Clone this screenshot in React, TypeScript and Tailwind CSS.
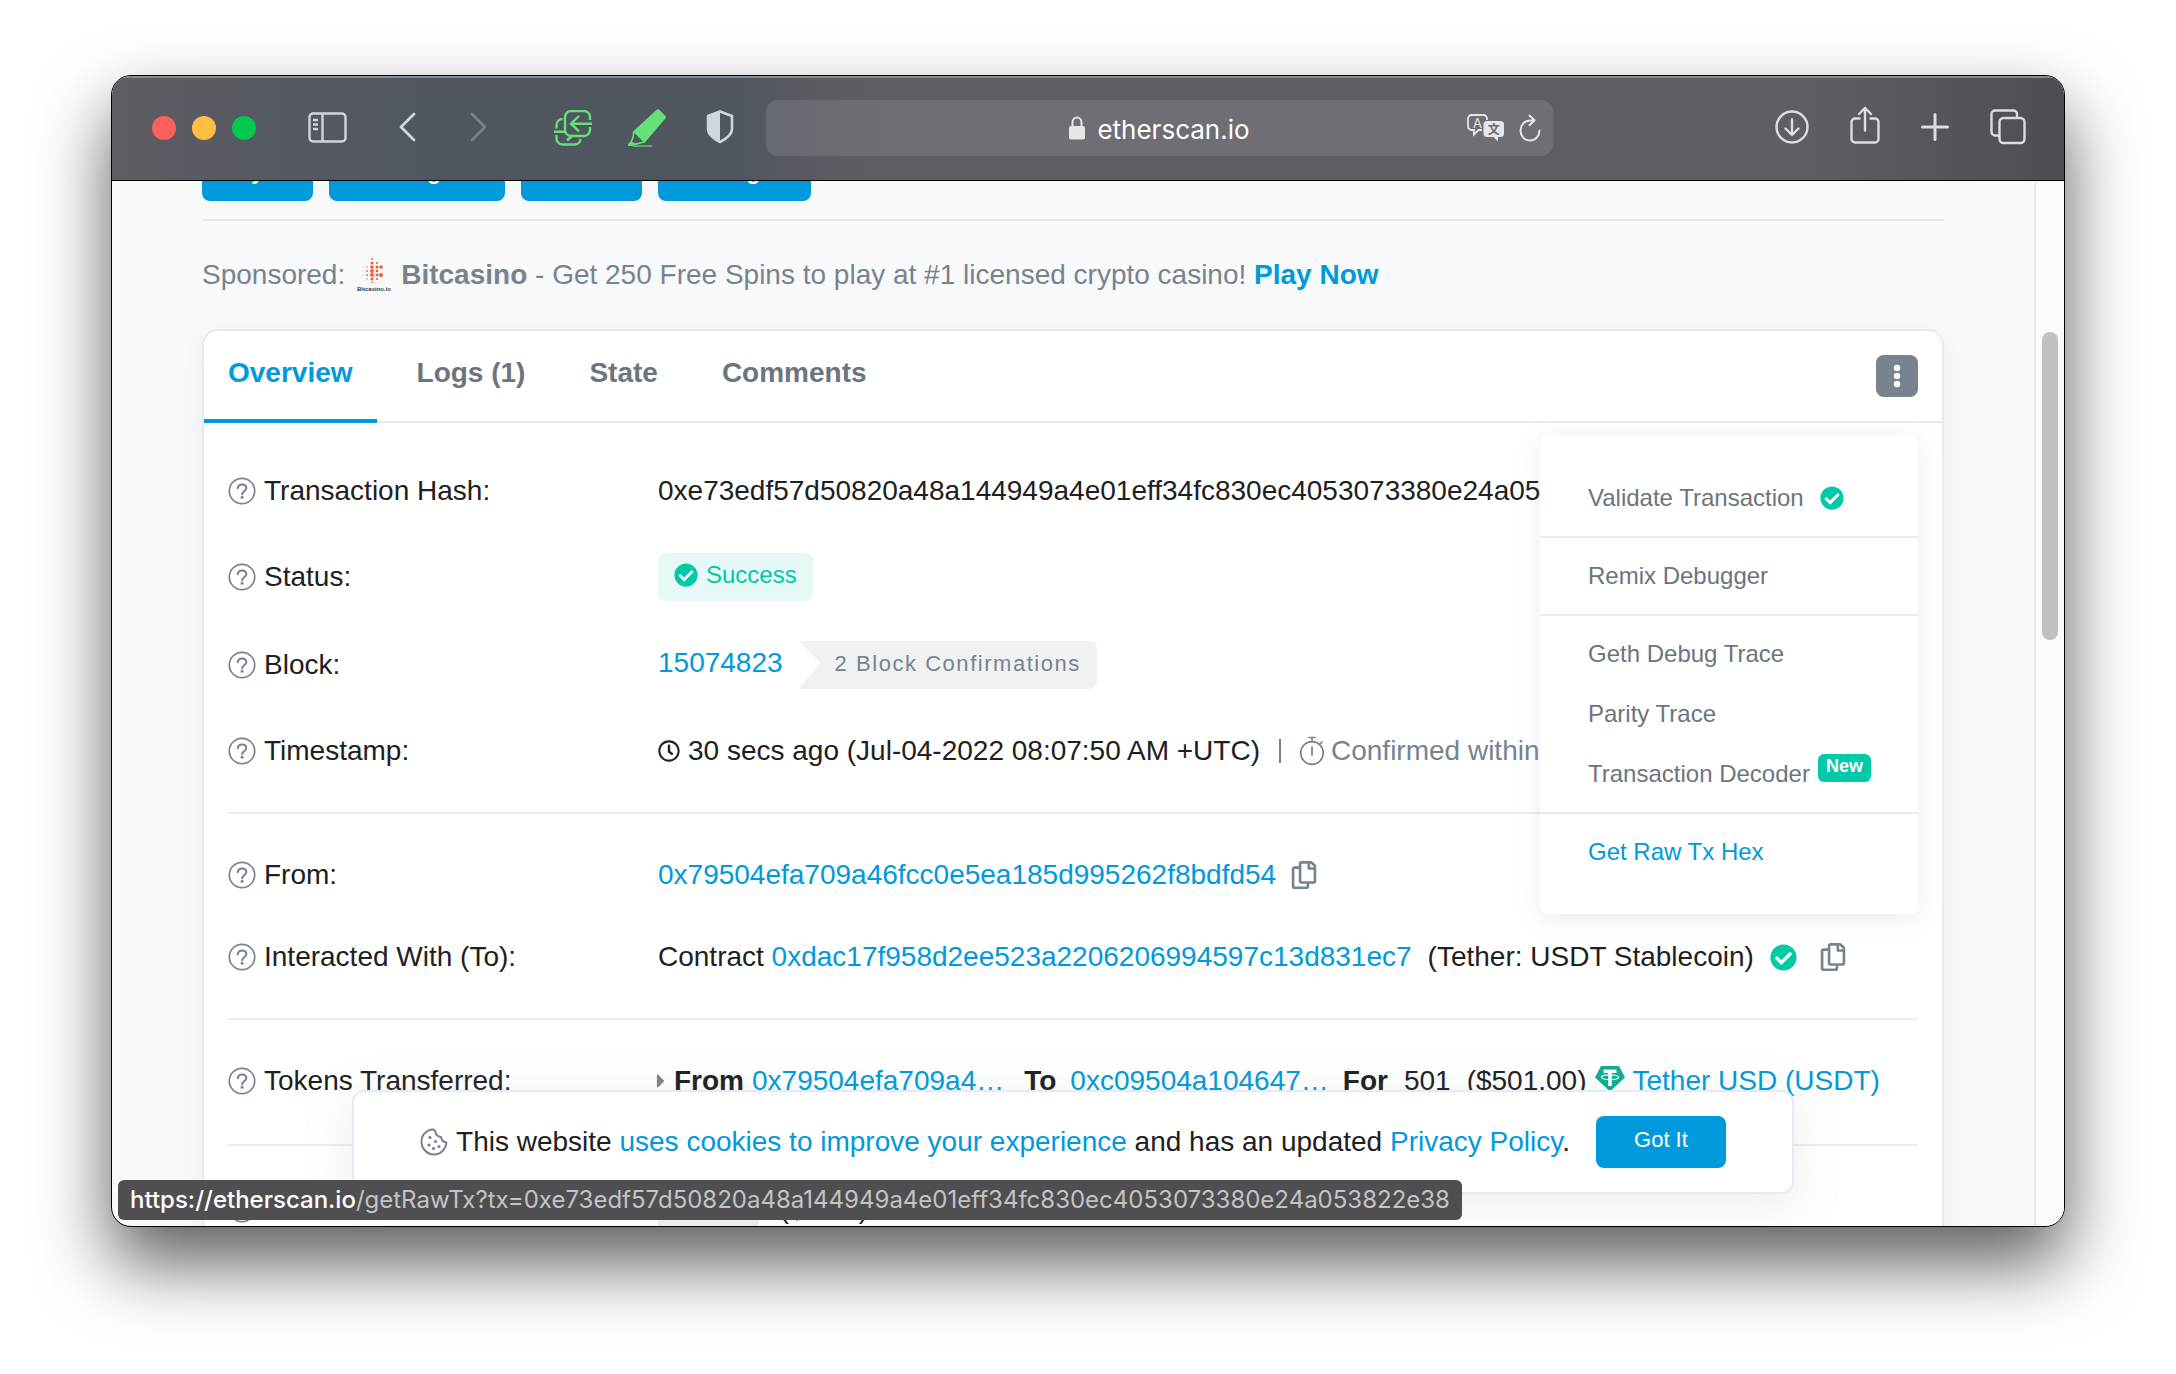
import type { ReactNode } from "react";
import { FaCheckCircle, FaRegClock, FaRegCopy, FaCaretRight } from "react-icons/fa";

const HASH = "0xe73edf57d50820a48a144949a4e01eff34fc830ec4053073380e24a053822e38";

const SidebarIcon = () => (
  <svg width="39" height="31" viewBox="0 0 39 31" fill="none" stroke="currentColor" strokeWidth="2.4">
    <rect x="1.5" y="1.5" width="36" height="28" rx="3.5" />
    <path d="M14.5 1.5v28M5 8h5M5 12.500h5M5 17h5" />
  </svg>
);

const Chevron = ({ flip = false }: { flip?: boolean }) => (
  <svg width="17" height="30" viewBox="0 0 17 30" fill="none" stroke="currentColor" strokeWidth="2.8" strokeLinecap="round" strokeLinejoin="round">
    <path d={flip ? "M2 2l13 13L2 28" : "M15 2L2 15l13 13"} />
  </svg>
);

const SwapTabsIcon = () => (
  <svg width="38" height="36" viewBox="0 0 38 36" fill="none" stroke="currentColor" strokeWidth="2.4">
    <path d="M36 10V7a6 6 0 0 0-6-6H17a6 6 0 0 0-6 6v13a6 6 0 0 0 6 6h13a6 6 0 0 0 6-6v-3" />
    <path d="M38 13.700H17M25 6l-8 7.700 8 7.700" />
    <path d="M8.500 9A6 6 0 0 0 2.500 15v3.500M0 21.700h11M2.500 25v3.500a6 6 0 0 0 6 6h12a6 6 0 0 0 6-5.500M18 26l-5 4.500" />
  </svg>
);

const HighlighterIcon = () => (
  <svg width="38" height="38" viewBox="0 0 38 38" fill="currentColor">
    <path d="M28.500 1Q30 -.5 31.500 1L37 6.500Q38.500 8 37.300 9.500L16.500 34 5 22.500z" />
    <path d="M5.500 23c.6 5-1 8-4 12.500 4 .8 10-1.500 14.500-2.500" fill="none" stroke="currentColor" strokeWidth="1.600" />
    <path d="M0 37c0-3 2-4.500 4-4s2.500 2 5 2.200L4 37z" />
    <path d="M5 36.300h19v1.500H5z" opacity=".8" />
  </svg>
);

const ShieldIcon = () => (
  <svg width="28" height="34" viewBox="0 0 28 34">
    <path d="M14 1.500L26 6v13c0 6-5 9.500-12 13C7 28.500 2 25 2 19V6z" fill="none" stroke="currentColor" strokeWidth="2.600" strokeLinejoin="round" />
    <path d="M14 1.500V32C7 28.500 2 25 2 19V6z" fill="currentColor" />
  </svg>
);

const LockIcon = () => (
  <svg width="16" height="24" viewBox="0 0 16 24">
    <rect x="0" y="10" width="16" height="13.500" rx="2" fill="currentColor" />
    <path d="M3.500 11V6.500a4.500 5 0 0 1 9 0V11" fill="none" stroke="currentColor" strokeWidth="2" />
  </svg>
);

const TranslateIcon = () => (
  <svg width="38" height="28" viewBox="0 0 38 28">
    <path d="M15 16h-3.500L7 20.500V16H4.500A3.500 3.500 0 0 1 1 12.500v-8A3.500 3.500 0 0 1 4.500 1h12A3.500 3.500 0 0 1 20 4.500V6" fill="none" stroke="currentColor" strokeWidth="1.800" />
    <path d="M20 7h13.500A3.500 3.500 0 0 1 37 10.500v9a3.500 3.500 0 0 1-3.500 3.500H31v4.500L26.500 23H20a3.500 3.500 0 0 1-3.500-3.500v-9A3.500 3.500 0 0 1 20 7z" fill="currentColor" />
    <text x="10.500" y="13.500" textAnchor="middle" fontSize="13" fontFamily="Inter, sans-serif" fill="currentColor">A</text>
    <text x="26.700" y="19.500" textAnchor="middle" fontSize="12" fontWeight="700" fontFamily="'Noto Sans CJK SC', sans-serif" fill="#6b6a70">文</text>
  </svg>
);

const ReloadIcon = () => (
  <svg width="22" height="28" viewBox="0 0 22 28" fill="none" stroke="currentColor" strokeWidth="2" strokeLinecap="round" strokeLinejoin="round">
    <path d="M20.500 16.500a9.500 10 0 1 1-9.500-10h3.500M10.500 1.500l5 4.800-5 5" />
  </svg>
);

const DownloadIcon = () => (
  <svg width="34" height="34" viewBox="0 0 34 34" fill="none" stroke="currentColor" strokeWidth="2.400" strokeLinecap="round" strokeLinejoin="round">
    <circle cx="17" cy="17" r="15.500" />
    <path d="M17 9.500v15M10.500 18.500l6.500 6.500 6.500-6.500" />
  </svg>
);

const ShareIcon = () => (
  <svg width="30" height="38" viewBox="0 0 30 38" fill="none" stroke="currentColor" strokeWidth="2.400" strokeLinecap="round" strokeLinejoin="round">
    <path d="M9.500 12.500H5A3.500 3.500 0 0 0 1.500 16v17A3.500 3.500 0 0 0 5 36.500h20a3.500 3.500 0 0 0 3.500-3.500V16a3.500 3.500 0 0 0-3.500-3.500h-4.500M15 24.500V2M9 8l6-6 6 6" />
  </svg>
);

const PlusIcon = () => (
  <svg width="28" height="28" viewBox="0 0 28 28" fill="none" stroke="currentColor" strokeWidth="3" strokeLinecap="round">
    <path d="M14 1.500v25M1.500 14h25" />
  </svg>
);

const TabsIcon = () => (
  <svg width="36" height="36" viewBox="0 0 36 36" fill="none" stroke="currentColor" strokeWidth="2.400">
    <rect x="9.500" y="9" width="25" height="25" rx="4" />
    <path d="M27 8.500V5a3.500 3.500 0 0 0-3.500-3.500H5A3.500 3.500 0 0 0 1.500 5v18A3.500 3.500 0 0 0 5 26.500h4" />
  </svg>
);

const HelpIcon = () => (
  <svg className="mr-2 shrink-0 text-[#77838f]" width="28" height="28" viewBox="0 0 28 28" fill="none" stroke="currentColor" strokeWidth="1.700">
    <circle cx="14" cy="14" r="12.700" />
    <path d="M9.800 11.200c.3-2.300 2-3.700 4.300-3.700 2.400 0 4.200 1.400 4.200 3.500 0 1.700-1 2.600-2.200 3.400-1.400.9-1.900 1.500-1.900 2.800" strokeWidth="2" strokeLinecap="round" />
    <circle cx="14.100" cy="20.300" r="1.500" fill="currentColor" stroke="none" />
  </svg>
);

const StopwatchIcon = () => (
  <svg className="mr-1.5 shrink-0" width="26" height="30" viewBox="0 0 26 30" fill="none" stroke="currentColor" strokeWidth="1.700" strokeLinecap="round">
    <circle cx="13" cy="17" r="11.300" />
    <path d="M10 1.500h6M13 1.500v4M13 11v8M21 8l2-2" />
  </svg>
);

const CookieIcon = () => (
  <svg className="mr-2 shrink-0 text-[#77838f]" width="28" height="28" viewBox="0 0 28 28" fill="none" stroke="currentColor" strokeWidth="2" strokeLinejoin="round">
    <path d="M13.500 1.500C10 1 7.500 2.500 5 5 2.500 7 1.800 9.500 1.500 13c-.3 3 .5 6 3 9 2.500 3 5.500 4.500 9.500 4.500 3.500 0 6-1 8.500-3.500s3.500-4.500 4-8.500c-3.500-.3-5-2.500-5.500-5.500-3-.5-5.500-2-5.500-5.500z" />
    <g fill="currentColor" stroke="none">
      <circle cx="10" cy="9.500" r="1.600" />
      <circle cx="9" cy="17" r="1.600" />
      <circle cx="15.500" cy="13.500" r="1.600" />
      <circle cx="19" cy="18.500" r="1.600" />
      <circle cx="13.500" cy="20.500" r="1.600" />
    </g>
  </svg>
);

const TetherIcon = () => (
  <svg className="mx-2 -mt-1.5 shrink-0" width="30" height="27" viewBox="0 0 30 27">
    <path d="M6 1h18l6 11.500L15 26.500 0 12.500z" fill="#0fad8f" />
    <path d="M8.500 4.500h13v3.500h-4.700v13h-3.600V8H8.500z" fill="#fff" />
    <ellipse cx="15" cy="12.300" rx="8.500" ry="2.400" fill="none" stroke="#fff" strokeWidth="1.200" />
  </svg>
);

const BITCASINO_DOTS = [
  [13, 2, .9], [13, 6, 1.500], [18, 6, 1.100],
  [4, 10, .4], [8, 10, .7], [13, 10, 1.800], [18, 10, 1.500], [22, 10, 1.800],
  [4, 14, .4], [8, 14, .9], [13, 14, 1.900], [18, 14, 1.300],
  [4, 18, .4], [8, 18, .9], [13, 18, 1.900], [18, 18, 1.400], [22, 18, 2.100],
  [8, 22, .7], [13, 22, 1.500], [18, 22, 1.100], [13, 25.500, .8],
];

const BitcasinoLogo = () => (
  <svg className="mr-2.5 ml-3 shrink-0" width="34" height="36" viewBox="0 0 34 36">
    <g fill="#ff5a2c">
      {BITCASINO_DOTS.map(([x, y, r]) => <circle key={`${x}-${y}`} cx={x + 2} cy={y} r={r} />)}
    </g>
    <text x="17" y="34" textAnchor="middle" fontSize="6" fontWeight="700" fontFamily="'Liberation Sans', sans-serif" fill="#3a3a3a">Bitcasino.io</text>
  </svg>
);

const Link = ({ children, className = "" }: { children: ReactNode; className?: string }) => (
  <a href="#" className={`text-[#0099db] ${className}`}>{children}</a>
);

const CopyButton = ({ className }: { className: string }) => (
  <button type="button" aria-label="Copy" className={`shrink-0 text-[#77838f] ${className}`}>
    <FaRegCopy size={28} />
  </button>
);

const Row = ({ label, className, children }: { label: string; className: string; children: ReactNode }) => (
  <div className={`flex items-center ${className}`}>
    <dt className="flex w-[430px] shrink-0 items-center">
      <HelpIcon />
      {label}
    </dt>
    <dd className="flex min-w-0 flex-1 items-center">{children}</dd>
  </div>
);

const Rule = () => <hr className="mt-[21px] mb-[19px] border-t-2 border-[#e9edf3]" />;

const MenuItem = ({ children, active = false }: { children: ReactNode; active?: boolean }) => (
  <a href="#" role="menuitem" className={`flex h-[60px] items-center px-12 whitespace-nowrap ${active ? "text-[#0099db]" : "text-[#6c757d]"}`}>
    {children}
  </a>
);

const MenuRule = () => <hr className="my-2 border-t-2 border-[#e7eaf3]" />;

const Toolbar = () => (
  <header className="flex h-[105px] shrink-0 items-center border-b border-black bg-[linear-gradient(90deg,#5e5d63_0%,#555961_8%,#4f5660_20%,#50565f_32%,#5c5c63_37%,#5f5e64_42%,#5f5e64_86%,#4e4d53_100%)] pr-[38px] pl-10 text-[#d0d6e0] shadow-[inset_0_2px_0_#8b8d8c]">
    <div className="flex gap-4">
      <button type="button" aria-label="Close" className="size-6 rounded-full bg-[#ff605c]" />
      <button type="button" aria-label="Minimize" className="size-6 rounded-full bg-[#ffbd44]" />
      <button type="button" aria-label="Zoom" className="size-6 rounded-full bg-[#00ca4e]" />
    </div>
    <button type="button" aria-label="Sidebar" className="ml-[52px] pb-0.5"><SidebarIcon /></button>
    <button type="button" aria-label="Back" className="ml-[52px] pb-0.5"><Chevron /></button>
    <button type="button" aria-label="Forward" className="ml-[54px] pb-0.5 text-[#7b808a]"><Chevron flip /></button>
    <button type="button" aria-label="Swap tabs" className="ml-[67px] text-[#67e078]"><SwapTabsIcon /></button>
    <button type="button" aria-label="Highlighter" className="ml-9 text-[#67e078]"><HighlighterIcon /></button>
    <button type="button" aria-label="Privacy report" className="ml-10 pb-0.5"><ShieldIcon /></button>
    <div className="relative ml-8 flex h-14 flex-1 items-center justify-center rounded-xl bg-white/10 text-[#e6e6e8]">
      <LockIcon />
      <input aria-label="Address" defaultValue="etherscan.io" className="mt-1 ml-3 field-sizing-content bg-transparent font-['Inter',sans-serif] text-[26px] leading-9 text-white outline-none" />
      <div className="absolute right-3 flex items-center gap-3.5">
        <button type="button" aria-label="Translate"><TranslateIcon /></button>
        <button type="button" aria-label="Reload"><ReloadIcon /></button>
      </div>
    </div>
    <div className="ml-[222px] flex items-center gap-[41px] pb-0.5 text-[#dddce1]">
      <button type="button" aria-label="Downloads"><DownloadIcon /></button>
      <button type="button" aria-label="Share" className="pb-1"><ShareIcon /></button>
      <button type="button" aria-label="New tab"><PlusIcon /></button>
      <button type="button" aria-label="Tab overview"><TabsIcon /></button>
    </div>
  </header>
);

const PromoButton = ({ children, className }: { children: ReactNode; className: string }) => (
  <button type="button" className={`h-[54px] shrink-0 rounded-lg bg-[#0099db] px-5 pb-1 text-left text-[22px] font-bold text-white ${className}`}>
    {children}
  </button>
);

const ActionsMenu = () => (
  <div role="menu" className="absolute top-full right-0 z-10 mt-[39px] w-[378px] rounded-lg bg-white py-8 text-2xl shadow-[0_4px_24px_rgba(119,150,170,0.18)]">
    <MenuItem>Validate Transaction <FaCheckCircle size={24} className="ml-4 text-[#00c9a7]" /></MenuItem>
    <MenuRule />
    <MenuItem>Remix Debugger</MenuItem>
    <MenuRule />
    <MenuItem>Geth Debug Trace</MenuItem>
    <MenuItem>Parity Trace</MenuItem>
    <MenuItem>
      Transaction Decoder
      <span className="mb-3 ml-2 rounded-md bg-[#00c9a7] px-2 pb-1 text-lg leading-6 font-bold text-white">New</span>
    </MenuItem>
    <MenuRule />
    <MenuItem active>Get Raw Tx Hex</MenuItem>
  </div>
);

const TABS = ["Overview", "Logs (1)", "State", "Comments"];

const TransactionCard = () => (
  <section className="mt-9 rounded-2xl border-2 border-[#e7eaf3] bg-white text-[#1e2022] shadow-[0_6px_24px_rgba(140,152,164,0.13)]">
    <div className="flex h-[92px] border-b-2 border-[#e7eaf3]">
      <div role="tablist" className="-mb-0.5 flex gap-4 font-bold">
        {TABS.map((tab, i) => (
          <button
            key={tab}
            type="button"
            role="tab"
            aria-selected={i === 0}
            className={i === 0 ? "border-b-4 border-[#0099db] px-6 pb-1 text-[#0099db]" : "border-b-4 border-transparent px-6 pb-1 text-[#6c757d]"}
          >
            {tab}
          </button>
        ))}
      </div>
      <div className="relative mt-6 mr-6 ml-auto h-[42px]">
        <button type="button" aria-label="More" className="flex size-[42px] items-center justify-center rounded-lg bg-[#77838f]">
          <svg width="8" height="24" viewBox="0 0 8 24" fill="#fff">
            <circle cx="4" cy="4" r="3.200" />
            <circle cx="4" cy="12" r="3.200" />
            <circle cx="4" cy="20" r="3.200" />
          </svg>
        </button>
        <ActionsMenu />
      </div>
    </div>

    <dl className="px-6 pt-6 whitespace-nowrap">
      <Row label="Transaction Hash:" className="h-[88px]">{HASH}</Row>
      <Row label="Status:" className="h-[84px]">
        <span className="flex h-12 items-center rounded-lg bg-[#e6f9f6] px-4 pb-1 text-2xl text-[#00c9a7]">
          <FaCheckCircle size={24} className="mr-2" /> Success
        </span>
      </Row>
      <Row label="Block:" className="h-[92px]">
        <Link className="pb-1">15074823</Link>
        <span className="ml-4 flex h-12 items-center rounded-r-lg bg-[#f0f1f3] pr-4 pb-0.5 pl-9 text-[22px] tracking-[0.07em] text-[#77838f] [clip-path:polygon(0_0,100%_0,100%_100%,0_100%,22px_46%)]">
          2 Block Confirmations
        </span>
      </Row>
      <Row label="Timestamp:" className="h-20">
        <FaRegClock size={22} className="mr-2 shrink-0" />
        30 secs ago (Jul-04-2022 08:07:50 AM +UTC)
        <span className="flex items-center text-[#77838f]">
          <span aria-hidden="true" className="mr-[18px] ml-[19px] h-6 w-0.5 bg-[#77838f]" />
          <StopwatchIcon />
          Confirmed within 30 secs
        </span>
      </Row>
      <Rule />
      <Row label="From:" className="h-[84px]">
        <Link>0x79504efa709a46fcc0e5ea185d995262f8bdfd54</Link>
        <CopyButton className="ml-3.5" />
      </Row>
      <Row label="Interacted With (To):" className="h-20">
        <span>Contract <Link>0xdac17f958d2ee523a2206206994597c13d831ec7</Link></span>
        <span className="ml-4">(Tether: USDT Stablecoin)</span>
        <FaCheckCircle size={27} className="ml-4 shrink-0 text-[#00c9a7]" />
        <CopyButton className="ml-[22px]" />
      </Row>
      <Rule />
      <Row label="Tokens Transferred:" className="h-[84px]">
        <FaCaretRight size={22} className="mr-0.5 -ml-2 shrink-0 text-[#77838f]" />
        <b>From</b>
        <Link className="ml-2">0x79504efa709a4…</Link>
        <b className="ml-5">To</b>
        <Link className="ml-3.5">0xc09504a104647…</Link>
        <b className="ml-3.5">For</b>
        <span className="ml-4">501</span>
        <span className="ml-4">($501.00)</span>
        <TetherIcon />
        <Link>Tether USD (USDT)</Link>
      </Row>
      <Rule />
      <Row label="Value:" className="h-[88px]">
        <span className="rounded-lg bg-[#f0f1f3] px-3 py-3 text-2xl">0 Ether</span>
        <span className="ml-5">($0.00)</span>
      </Row>
    </dl>
  </section>
);

const CookieBanner = () => (
  <div className="absolute inset-x-0 bottom-8 z-20 mx-auto flex h-[104px] w-3/4 min-w-[1436px] items-center justify-center rounded-xl border-2 border-[#e7eaf3] bg-white whitespace-nowrap text-[#1e2022] shadow-[0_10px_40px_10px_rgba(140,160,160,0.13)]">
    <CookieIcon />
    <p>
      This website <Link>uses cookies to improve your experience</Link> and has an updated <Link>Privacy Policy</Link>.
    </p>
    <button type="button" className="ml-[26px] h-[52px] w-[130px] rounded-lg bg-[#0099db] pb-1 text-[22px] text-white">Got It</button>
  </div>
);

export default function App() {
  return (
    <div className="flex h-screen overflow-hidden bg-white px-[111px] pt-[75px] pb-[147px] font-['Liberation_Sans',Arial,sans-serif] text-[28px] leading-9">
      <div className="relative flex min-w-0 flex-1 flex-col overflow-hidden rounded-[20px] border border-black bg-[#f8f9fb] shadow-[0_36px_72px_rgba(0,0,0,0.64)]">
        <Toolbar />
        <div className="flex min-h-0 flex-1">
          <div className="relative min-w-0 flex-1 overflow-hidden">
            <main className="px-[90px]">
              <div className="flex h-5 items-end gap-4 overflow-hidden">
                <PromoButton className="w-[111px]">Buy</PromoButton>
                <PromoButton className="w-44">Exchange</PromoButton>
                <PromoButton className="w-[121px]">Earn</PromoButton>
                <PromoButton className="w-[153px]">Gaming</PromoButton>
              </div>
              <hr className="mt-[18px] border-t-2 border-[#e4eaf0]" />
              <p className="mt-9 flex items-center whitespace-nowrap text-[#77838f]">
                Sponsored: <BitcasinoLogo />
                <span><b>Bitcasino</b> - Get 250 Free Spins to play at #1 licensed crypto casino! <Link className="font-bold">Play Now</Link></span>
              </p>
              <TransactionCard />
            </main>
            <CookieBanner />
          </div>
          <div className="w-[30px] shrink-0 border-l-2 border-[#e8e8e8] bg-[#fafafa] pt-[151px]">
            <div className="mx-auto h-[308px] w-4 rounded-full bg-[#c1c1c1]" />
          </div>
        </div>
        <div className="absolute bottom-1.5 left-1.5 z-30 flex h-10 items-center rounded-md bg-[#4f4f51] px-3 font-['Inter',sans-serif] text-2xl whitespace-nowrap text-[#c3c3c4]">
          <span className="font-medium text-white">https://etherscan.io</span>
          <span>/getRawTx?tx={HASH}</span>
        </div>
      </div>
    </div>
  );
}
